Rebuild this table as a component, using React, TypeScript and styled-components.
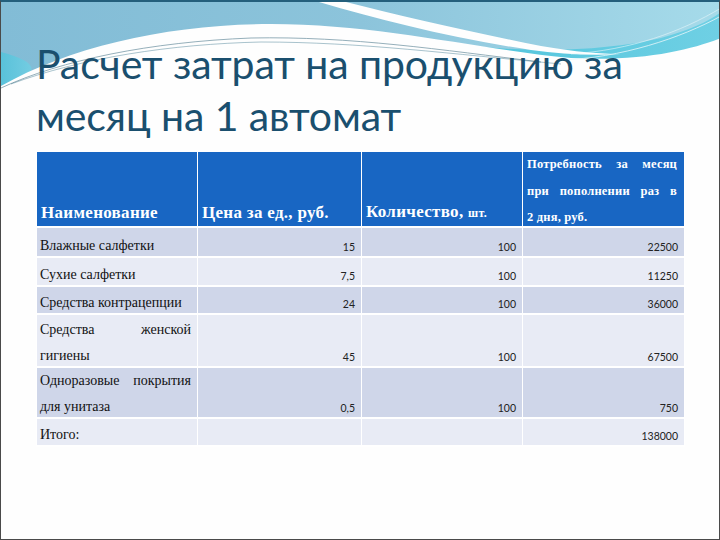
import React from "react";
import styled, { createGlobalStyle } from "styled-components";

const Global = createGlobalStyle`
  html, body { margin: 0; padding: 0; background: #ffffff; }
  body { width: 720px; height: 540px; overflow: hidden; }
`;

const Slide = styled.div`
  position: relative;
  width: 720px;
  height: 540px;
  box-sizing: border-box;
  border: 1px solid #4a4a4a;
  border-top: 2px solid #245f7c;
  background: #fefefe;
  overflow: hidden;
`;

const Banner = styled.svg`
  position: absolute;
  left: 0;
  top: 0;
  z-index: 0;
`;

const Content = styled.div`
  position: relative;
  z-index: 1;
  display: flex;
  flex-direction: column;
  padding: 36px 0 0 35px;
`;

const Title = styled.h1`
  margin: 0;
  font-family: "Lato", "Open Sans", sans-serif;
  font-weight: 400;
  font-size: 41px;
  line-height: 52px;
  color: #1a4f6e;
  letter-spacing: -0.1px;
  white-space: nowrap;
`;

const Table = styled.table`
  margin: 8px 0 0 0;
  width: 648px;
  border-collapse: separate;
  border-spacing: 1px 2px;
  table-layout: fixed;
  background: #ffffff;
`;

const HeadCell = styled.th`
  background: #1866c3;
  color: #ffffff;
  font-family: "Liberation Serif", "Times New Roman", serif;
  font-weight: 700;
  font-size: 17px;
  line-height: 20px;
  letter-spacing: 0.3px;
  text-align: left;
  vertical-align: bottom;
  height: 74px;
  padding: 0 4px 3px 4px;
  box-sizing: border-box;
  white-space: nowrap;
`;

const HeadNote = styled.th`
  background: #1866c3;
  color: #ffffff;
  font-family: "Liberation Serif", "Times New Roman", serif;
  font-weight: 700;
  font-size: 12.5px;
  letter-spacing: 0.2px;
  text-align: left;
  vertical-align: top;
  height: 74px;
  padding: 0 7px 0 4px;
  box-sizing: border-box;
`;

const NoteText = styled.div`
  margin-top: -1px;
  height: 74px;
  line-height: 26.5px;
`;

const NoteLine = styled.div<{ $last?: boolean }>`
  text-align: ${(p) => (p.$last ? "left" : "justify")};
  text-align-last: ${(p) => (p.$last ? "left" : "justify")};
  white-space: nowrap;
`;

const Small = styled.span`
  font-size: 12px;
`;

const Row = styled.tr<{ $dark: boolean }>`
  background: ${(p) => (p.$dark ? "#cfd6e9" : "#e8ebf5")};
`;

const NameCell = styled.td`
  background: inherit;
  font-family: "Liberation Serif", "Times New Roman", serif;
  font-size: 14px;
  color: #111;
  padding: 0 6px 0 3px;
  vertical-align: bottom;
`;

const NameText = styled.div`
  line-height: 26px;
  margin-bottom: -3px;
  text-align: justify;
  text-align-last: left;
`;

const NumCell = styled.td`
  background: inherit;
  font-family: "Lato", "Open Sans", sans-serif;
  font-size: 10.5px;
  color: #222;
  text-align: right;
  vertical-align: bottom;
  padding: 0 6px 2px 0;
  line-height: 14px;
`;

const rows = [
  { name: "Влажные салфетки", price: "15", qty: "100", sum: "22500", h: 28 },
  { name: "Сухие салфетки", price: "7,5", qty: "100", sum: "11250", h: 27 },
  { name: "Средства контрацепции", price: "24", qty: "100", sum: "36000", h: 26 },
  { name: "Средства женской гигиены", price: "45", qty: "100", sum: "67500", h: 51 },
  { name: "Одноразовые покрытия для унитаза", price: "0,5", qty: "100", sum: "750", h: 48 },
  { name: "Итого:", price: "", qty: "", sum: "138000", h: 26 },
];

function WaveBanner() {
  return (
    <Banner width="720" height="110" viewBox="0 0 720 110">
      <defs>
        <linearGradient id="sky" x1="0" y1="0" x2="1" y2="0">
          <stop offset="0" stopColor="#82bcd6" />
          <stop offset="0.5" stopColor="#8cc4db" />
          <stop offset="1" stopColor="#a6dbea" />
        </linearGradient>
        <linearGradient id="cy" x1="0" y1="0" x2="1" y2="0">
          <stop offset="0" stopColor="#4fc3db" />
          <stop offset="1" stopColor="#6fd0e4" />
        </linearGradient>
      </defs>
      <rect x="0" y="0" width="720" height="110" fill="url(#sky)" />
      <path d="M0,50 C30,58 50,70 0,84 Z" fill="url(#cy)" opacity="0.8" />
      <path
        d="M440,40 C520,52 600,50 660,36 C690,28 710,18 720,10 L720,38 C690,54 640,62 580,60 C530,58 480,52 440,48 Z"
        fill="url(#cy)"
      />
      <path
        d="M0,84 C70,44 170,22 270,22 C380,22 480,48 570,56 C640,60 690,48 720,36 L720,110 L0,110 Z"
        fill="#fefefe"
      />
      <path
        d="M318,0 L345,0 C400,14 470,30 540,44 C575,50 600,52 620,52 C590,54 560,52 530,48 C450,36 380,18 318,0 Z"
        fill="#fefefe"
      />
      <path
        d="M0,86 C60,58 150,40 250,36 C350,34 440,48 540,60"
        stroke="#7a9aa8"
        strokeWidth="0.8"
        fill="none"
      />
      <path
        d="M10,82 C80,56 170,42 260,40 C360,40 450,52 560,62"
        stroke="#2f6f86"
        strokeWidth="0.6"
        fill="none"
        opacity="0.7"
      />
      <path d="M560,58 C620,56 680,36 720,14" stroke="#e8f6fa" strokeWidth="0.8" fill="none" />
      <path d="M570,52 C630,48 680,30 720,6" stroke="#e8f6fa" strokeWidth="0.6" fill="none" />
    </Banner>
  );
}

export default function App() {
  return (
    <Slide>
      <Global />
      <WaveBanner />
      <Content>
        <Title>
          Расчет затрат на продукцию за
          <br />
          месяц на 1 автомат
        </Title>
        <Table>
          <colgroup>
            <col style={{ width: 160 }} />
            <col style={{ width: 163 }} />
            <col style={{ width: 160 }} />
            <col style={{ width: 161 }} />
          </colgroup>
          <thead>
            <tr>
              <HeadCell>Наименование</HeadCell>
              <HeadCell>Цена за ед., руб.</HeadCell>
              <HeadCell>
                Количество, <Small>шт.</Small>
              </HeadCell>
              <HeadNote>
                <NoteText>
                  <NoteLine>Потребность за месяц</NoteLine>
                  <NoteLine>при пополнении раз в</NoteLine>
                  <NoteLine $last>2 дня, руб.</NoteLine>
                </NoteText>
              </HeadNote>
            </tr>
          </thead>
          <tbody>
            {rows.map((r, i) => (
              <Row key={i} $dark={i % 2 === 0} style={{ height: r.h }}>
                <NameCell>
                  <NameText>{r.name}</NameText>
                </NameCell>
                <NumCell>{r.price}</NumCell>
                <NumCell>{r.qty}</NumCell>
                <NumCell>{r.sum}</NumCell>
              </Row>
            ))}
          </tbody>
        </Table>
      </Content>
    </Slide>
  );
}
